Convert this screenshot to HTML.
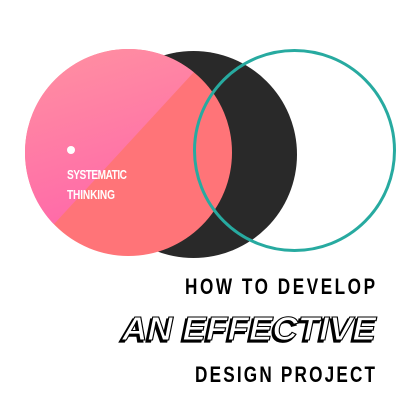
<!DOCTYPE html>
<html><head><meta charset="utf-8"><style>html,body{margin:0;padding:0;background:#fff}svg{display:block}</style></head>
<body>
<svg width="420" height="420" viewBox="0 0 420 420" xmlns="http://www.w3.org/2000/svg">
<defs>
<linearGradient id="g" x1="0" y1="0" x2="0.3" y2="1">
<stop offset="0" stop-color="#ff9d9f"/><stop offset="1" stop-color="#ff62aa"/>
</linearGradient>
<clipPath id="c"><circle cx="128.5" cy="152.5" r="103.5"/></clipPath>
</defs>
<circle cx="193.5" cy="154.5" r="103.5" fill="#292929"/>
<g clip-path="url(#c)">
<rect x="20" y="45" width="220" height="220" fill="#ff7478"/>
<polygon points="193,73 260,0 0,0 0,262 55,223" fill="url(#g)"/>
</g>
<circle cx="294.5" cy="150.5" r="100" fill="none" stroke="#27aaa0" stroke-width="3"/>
<circle cx="71" cy="150" r="4" fill="#fff"/>
<g transform="scale(0.78,1)" font-family="'Liberation Sans', sans-serif" fill="#fff" font-size="13" font-weight="bold">
<text x="85.9" y="179" textLength="76.9" lengthAdjust="spacing">SYSTEMATIC</text>
<text x="85.9" y="199" textLength="61.5" lengthAdjust="spacing">THINKING</text>
</g>
<g transform="scale(0.78,1)" font-family="'Liberation Sans', sans-serif" font-weight="bold" fill="#000" font-size="22">
<text x="237.2" y="294" textLength="243.6" lengthAdjust="spacing">HOW TO DEVELOP</text>
<text x="250" y="382" textLength="230.8" lengthAdjust="spacing">DESIGN PROJECT</text>
</g>
<g font-family="Liberation Sans, sans-serif" font-weight="bold" font-style="italic" font-size="33">
<text x="120" y="342" textLength="254" lengthAdjust="spacingAndGlyphs" fill="#000" stroke="#000" stroke-width="1.2">AN EFFECTIVE</text>
<text x="122" y="340" textLength="254" lengthAdjust="spacingAndGlyphs" fill="#fff" stroke="#000" stroke-width="1.1">AN EFFECTIVE</text>
</g>
</svg>
</body></html>
